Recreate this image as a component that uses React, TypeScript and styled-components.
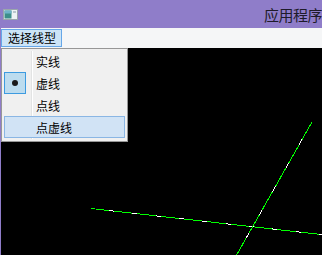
import styled, { createGlobalStyle } from 'styled-components';

const GlobalStyle = createGlobalStyle`
  html, body {
    margin: 0;
    padding: 0;
    background: #000;
  }
  body {
    font-family: "Noto Sans CJK SC", "Liberation Sans", sans-serif;
  }
`;

type LineStyle = { key: string; label: string };

const lineStyles: LineStyle[] = [
  { key: 'solid', label: '实线' },
  { key: 'dash', label: '虚线' },
  { key: 'dot', label: '点线' },
  { key: 'dashdot', label: '点虚线' },
];

const checked = 'dash';
const hovered = 'dashdot';

const AppIcon = () => (
  <svg width="15" height="11" viewBox="0 0 15 11">
    <rect x="0.5" y="0.5" width="14" height="10" fill="#eef2f4" stroke="#9aa6ac" />
    <rect x="1.5" y="1.5" width="7" height="8" fill="#3c8f8a" />
    <rect x="1.5" y="1.5" width="7" height="3" fill="#6fb3c9" />
    <rect x="10" y="2" width="3" height="2" fill="#b8c6cc" />
  </svg>
);

export default function App() {
  return (
    <Window>
      <GlobalStyle />
      <TitleBar>
        <AppIcon />
        <Title>应用程序</Title>
      </TitleBar>
      <MenuBar>
        <MenuButton>选择线型</MenuButton>
      </MenuBar>
      <Canvas>
        <svg width="321" height="207" viewBox="1 48 321 207" shapeRendering="crispEdges">
          <line x1="91" y1="208.5" x2="330" y2="235.5" stroke="#00ff00" strokeWidth="1" />
          <line
            x1="91"
            y1="208.5"
            x2="330"
            y2="235.5"
            stroke="#ffffff"
            strokeWidth="1"
            strokeDasharray="5 18.5"
            strokeDashoffset="-18"
          />
          <line x1="312" y1="122" x2="236" y2="256" stroke="#00ff00" strokeWidth="1" />
          <line
            x1="312"
            y1="122"
            x2="236"
            y2="256"
            stroke="#ffffff"
            strokeWidth="1"
            strokeDasharray="6 21"
            strokeDashoffset="-20"
          />
        </svg>
      </Canvas>
      <Popup>
        <Separator />
        {lineStyles.map((s) => (
          <MenuItem key={s.key} $active={s.key === hovered}>
            <CheckSlot $checked={s.key === checked}>{s.key === checked && <Dot />}</CheckSlot>
            <ItemLabel>{s.label}</ItemLabel>
          </MenuItem>
        ))}
      </Popup>
    </Window>
  );
}

const Window = styled.div`
  position: relative;
  width: 322px;
  height: 255px;
  overflow: hidden;
  display: flex;
  flex-direction: column;
  background: #8f7dc9;
`;

const TitleBar = styled.div`
  height: 28px;
  flex-shrink: 0;
  display: flex;
  align-items: center;
  padding-left: 3px;
  box-sizing: border-box;
  background: #8f7dc9;
`;

const Title = styled.span`
  margin-left: 246px;
  white-space: nowrap;
  font-size: 15px;
  color: #1e1b2a;
  letter-spacing: -0.5px;
`;

const MenuBar = styled.div`
  height: 20px;
  flex-shrink: 0;
  margin-left: 1px;
  display: flex;
  align-items: stretch;
  background: #f5f6f7;
`;

const MenuButton = styled.div`
  width: 61px;
  margin: 1px 0 1px 0;
  box-sizing: border-box;
  border: 1px solid #66a7e8;
  background: #cce4f7;
  font-size: 12px;
  line-height: 16px;
  padding-left: 6px;
  color: #000;
`;

const Canvas = styled.div`
  flex: 1;
  margin-left: 1px;
  background: #000;
  display: flex;
  svg {
    display: block;
  }
`;

const Popup = styled.div`
  position: absolute;
  left: 1px;
  top: 48px;
  width: 127px;
  height: 94px;
  box-sizing: border-box;
  border: 1px solid #979797;
  background: #f0f0f0;
  padding: 1px 2px;
  display: flex;
  flex-direction: column;
  box-shadow: 1px 1px 1px rgba(0, 0, 0, 0.3);
`;

const Separator = styled.div`
  position: absolute;
  left: 29px;
  top: 2px;
  bottom: 2px;
  width: 1px;
  background: #e2e3e3;
  border-right: 1px solid #ffffff;
`;

const MenuItem = styled.div<{ $active: boolean }>`
  position: relative;
  height: 22px;
  box-sizing: border-box;
  display: flex;
  align-items: center;
  border: 1px solid ${(p) => (p.$active ? '#8ab6e4' : 'transparent')};
  background: ${(p) => (p.$active ? '#d1e3f5' : 'transparent')};
`;

const CheckSlot = styled.div<{ $checked: boolean }>`
  width: 22px;
  height: 22px;
  margin: -1px 0 0 -1px;
  box-sizing: border-box;
  display: flex;
  align-items: center;
  justify-content: center;
  border: 1px solid ${(p) => (p.$checked ? '#3d9be0' : 'transparent')};
  background: ${(p) => (p.$checked ? '#bcdcef' : 'transparent')};
`;

const Dot = styled.div`
  width: 6px;
  height: 6px;
  border-radius: 50%;
  background: #1a1a1a;
`;

const ItemLabel = styled.span`
  margin-left: 10px;
  font-size: 12px;
  color: #000;
`;
